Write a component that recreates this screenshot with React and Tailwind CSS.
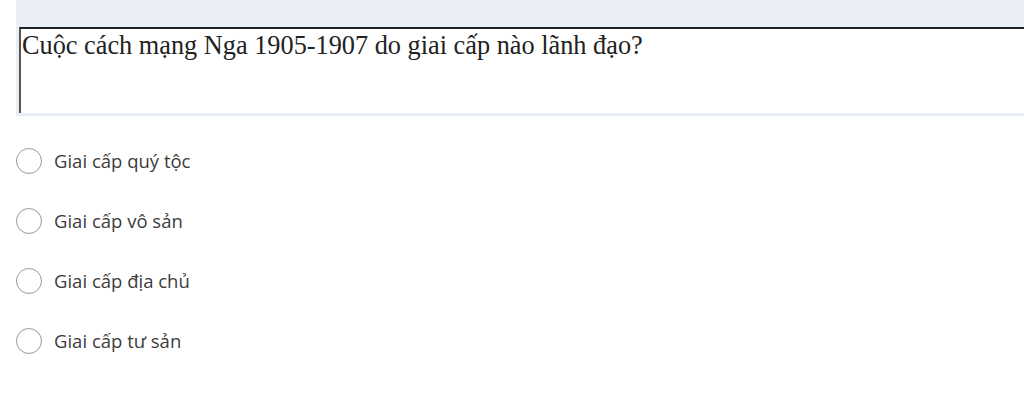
import React from 'react'

const options = ['Giai cấp quý tộc', 'Giai cấp vô sản', 'Giai cấp địa chủ', 'Giai cấp tư sản']

const App = () => {
  return (
    <div className="w-[1024px] h-[411px] bg-white overflow-hidden">
      {/* Question */}
      <div className="ml-4 bg-[#e8eef3] pt-[27px] pb-[3px]">
        <div className="ml-[3px] h-[86px] bg-white border-t-2 border-l-2 border-t-[#222] border-l-[#555] px-[1px] pt-[2px]">
          <p className="text-[26.3px] leading-[30px] text-[#222]" style={{ fontFamily: '"Liberation Serif", "Times New Roman", serif' }}>
            Cuộc cách mạng Nga 1905-1907 do giai cấp nào lãnh đạo?
          </p>
        </div>
      </div>

      {/* Options */}
      <div className="pl-4 pt-[32px] flex flex-col gap-[34px]">
        {options.map((opt) => (
          <label key={opt} className="flex items-center gap-[12px] h-[26px]">
            <span className="w-[26px] h-[26px] rounded-full border-[1.5px] border-[#9a9a9a] bg-white shrink-0" />
            <span className="text-[18.5px] text-[#3c3c3c]" style={{ fontFamily: '"Open Sans", "Noto Sans", sans-serif' }}>
              {opt}
            </span>
          </label>
        ))}
      </div>
    </div>
  )
}

export default App
